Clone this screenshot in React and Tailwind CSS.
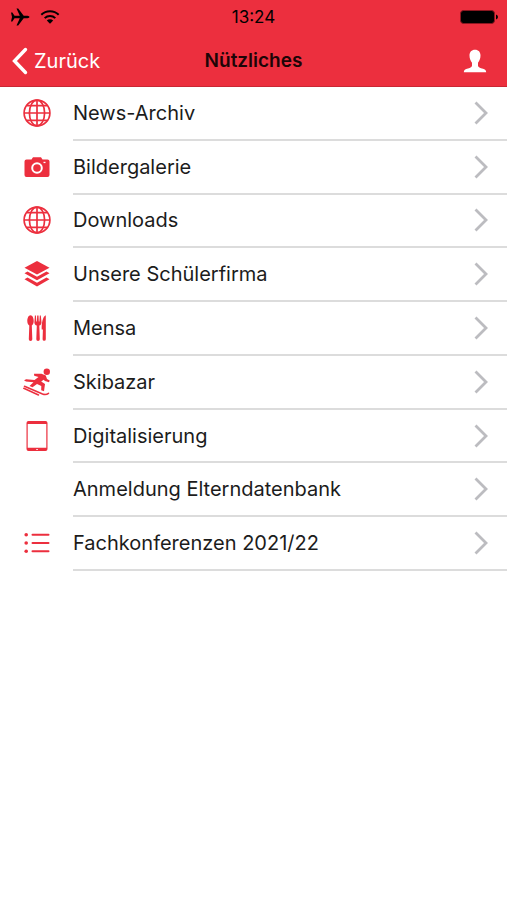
const RED = "text-[#ec2f3e]";

function Globe() {
  return (
    <svg viewBox="0 0 28 28" className="size-7" fill="none" stroke="currentColor" strokeWidth="1.7" aria-hidden="true">
      <circle cx="14" cy="14" r="12.9" />
      <ellipse cx="14" cy="14" rx="7.6" ry="12.9" />
      <path d="M14 1v26M1 14h26M3.6 6.7h20.8M3.6 21.3h20.8" />
    </svg>
  );
}

function Camera() {
  return (
    <svg viewBox="0 0 28 28" className="size-7" fill="currentColor" aria-hidden="true">
      <path d="M3.500 6.500h5L10 4.200h8l1.500 2.300h5q2 0 2 2v13.500q0 2-2 2h-21q-2 0-2-2V8.500q0-2 2-2z" />
      <circle cx="14" cy="15" r="4.800" fill="none" stroke="#fff" strokeWidth="2" />
      <path d="M20.500 8.800h2v1.300h-2z" fill="#fff" />
    </svg>
  );
}

function Layers() {
  return (
    <svg viewBox="0 0 28 28" className="size-7" fill="currentColor" aria-hidden="true">
      <path d="M14 1 26.500 7.800 14 14.500 1.500 7.800z" />
      <path d="M1.500 13.200 4.500 11.600 14 16.700 23.500 11.600 26.500 13.200 14 20.200z" />
      <path d="M1.500 19.200 4.500 17.600 14 22.700 23.500 17.600 26.500 19.200 14 26.600z" />
    </svg>
  );
}

function Cutlery() {
  return (
    <svg viewBox="0 0 28 28" className="size-7" fill="currentColor" aria-hidden="true">
      <path d="M7.500 1.200c2 0 3.200 2.900 3.200 5.800 0 2.300-.7 3.800-1.900 4.500l.5 13.700a1.700 1.700 0 0 1-3.500 0l.5-13.700C5 10.800 4.300 9.300 4.300 7c0-2.900 1.200-5.800 3.200-5.800z" />
      <path d="M11.900 1.500h1l.4 6h.6l.3-6h1.300l.3 6h.6l.4-6h1l.7 7c0 1.600-.8 2.700-2.200 3.100l.5 13.600a1.700 1.700 0 0 1-3.500 0l.5-13.600c-1.500-.4-2.400-1.500-2.400-3.100z" />
      <path d="M22.800 1.200v24a1.600 1.600 0 0 1-3.200 0l.3-9.700h-1.200C18.500 9 19.700 2.500 22.800 1.200z" />
    </svg>
  );
}

function Skier() {
  return (
    <svg viewBox="0 0 28 28" className="size-7" aria-hidden="true">
      <circle cx="23.800" cy="3.800" r="3.200" fill="currentColor" />
      <path
        fill="currentColor"
        d="M11 5.800 18.500 5.800 22.800 7.600 24 11 26.700 12.400 26 14.200 22 13 20.600 11.800 18.200 13.600 22 16 21 23.200 18.200 22.300 18.300 18 14 15.900 9.500 19.200 6.500 18 10.500 14.300 3 13.600 1 12.300 3.200 11.200 11.500 12 15.500 9 11.200 7.700z"
      />
      <path
        d="M1.500 18.300 19.500 26q3.500 1.200 6-.7M.8 20.300 15.500 27"
        fill="none"
        stroke="currentColor"
        strokeWidth="1.500"
        strokeLinecap="round"
      />
    </svg>
  );
}

function Tablet() {
  return (
    <svg viewBox="0 0 28 32" className="h-8 w-7" fill="currentColor" aria-hidden="true">
      <path
        fillRule="evenodd"
        d="M5.500 1h17q2 0 2 2v26q0 2-2 2h-17q-2 0-2-2V3q0-2 2-2zM4.700 4v23.700h18.600V4z"
      />
      <path d="M13.300 29h1.500v1h-1.500z" fill="#fff" />
    </svg>
  );
}

function ListIcon() {
  return (
    <svg viewBox="0 0 28 28" className="size-7" fill="currentColor" aria-hidden="true">
      <circle cx="3.200" cy="5.700" r="1.800" />
      <circle cx="3.200" cy="14" r="1.800" />
      <circle cx="3.200" cy="22.300" r="1.800" />
      <rect x="8.500" y="4.700" width="18" height="2" rx="1" />
      <rect x="8.500" y="13" width="18" height="2" rx="1" />
      <rect x="8.500" y="21.300" width="18" height="2" rx="1" />
    </svg>
  );
}

const ITEMS = [
  { label: "News-Archiv", Icon: Globe },
  { label: "Bildergalerie", Icon: Camera },
  { label: "Downloads", Icon: Globe },
  { label: "Unsere Schülerfirma", Icon: Layers },
  { label: "Mensa", Icon: Cutlery },
  { label: "Skibazar", Icon: Skier },
  { label: "Digitalisierung", Icon: Tablet },
  { label: "Anmeldung Elterndatenbank", Icon: null },
  { label: "Fachkonferenzen 2021/22", Icon: ListIcon },
];

function StatusBar() {
  return (
    <div className="grid h-[34px] grid-cols-3 items-center px-2 text-black">
      <div className="flex items-center gap-2.5 pl-0.5">
        <svg viewBox="0 0 20 18" className="h-[18px] w-5" fill="currentColor" aria-label="Flugmodus">
          <path d="M1 4.500h1.400L4.500 7.700h5.300L6.500.5h1.700l5.500 7.200h3.800q2 .4 2 1.300t-2 1.300h-3.800l-5.500 7.200H6.500l3.300-7.200H4.500l-2.100 3.200H1L2 9z" />
        </svg>
        <svg viewBox="0 0 20 16" className="h-4 w-5" fill="none" stroke="currentColor" strokeWidth="2" aria-label="WLAN">
          <path d="M1.300 5.700a12.400 12.400 0 0 1 17.400 0M4.700 9.100a7.500 7.500 0 0 1 10.600 0" />
          <path d="M6.800 11.500a4.500 4.500 0 0 1 6.400 0L10 14.700z" fill="currentColor" stroke="none" />
        </svg>
      </div>
      <div className="text-center text-[17px] leading-5">13:24</div>
      <svg viewBox="0 0 40 16" className="h-4 w-10 justify-self-end" aria-label="Akku voll">
        <rect x="1.500" y="1.500" width="34" height="13" rx="3" fill="#000" stroke="#8b1720" />
        <path d="M37 5.500q2 .6 2 2.500t-2 2.500z" fill="#000" />
      </svg>
    </div>
  );
}

export default function App() {
  return (
    <div className="min-h-screen bg-white font-['Inter','Liberation_Sans',sans-serif]">
      <header className="border-b border-[#c92734] bg-[#ec2f3e]">
        <StatusBar />
        <div className="grid h-[52px] grid-cols-[1fr_auto_1fr] items-center px-3 pt-0.5">
          <button type="button" className="flex items-center gap-1.5 justify-self-start text-xl text-white">
            <svg viewBox="0 0 16 28" className="h-7 w-4" fill="none" stroke="currentColor" strokeWidth="3.400" strokeLinecap="round" aria-hidden="true">
              <path d="M13.500 2.500 2.500 14l11 11.500" />
            </svg>
            Zurück
          </button>
          <h1 className="text-[19px] font-semibold text-[#1d0507]">Nützliches</h1>
          <button type="button" aria-label="Profil" className="justify-self-end pr-2 text-white">
            <svg viewBox="0 0 24 24" className="size-6" fill="currentColor" aria-hidden="true">
              <path d="M12 .8c3.500 0 5.500 2.300 5.500 5.800 0 3-1.100 5.500-2.500 7.200v3c0 1.300 1.500 2 4 2.700 2.700.7 4.200 1.400 4.200 3.800H.8c0-2.400 1.500-3.100 4.200-3.800 2.500-.7 4-1.400 4-2.700v-3C7.600 12.100 6.500 9.600 6.500 6.600 6.500 3.100 8.500.8 12 .8z" />
            </svg>
          </button>
        </div>
      </header>
      <nav aria-label="Nützliches">
        <ul className="grid min-h-[484px] auto-rows-fr">
          {ITEMS.map(({ label, Icon }) => (
            <li key={label}>
              <a href="#" className="flex h-full items-stretch">
                <span className={`flex w-[73px] shrink-0 items-center justify-center pb-0.5 ${RED}`}>{Icon && <Icon />}</span>
                <span className="flex flex-1 items-center justify-between border-b-2 border-[#dcdcdc] pr-[19px] text-xl text-[#1c1c1c]">
                  {label}
                  <svg viewBox="0 0 14 24" className="h-6 w-3.5" fill="none" stroke="#bcbcc0" strokeWidth="2.800" aria-hidden="true">
                    <path d="M1.500 1.500 12 12 1.500 22.500" />
                  </svg>
                </span>
              </a>
            </li>
          ))}
        </ul>
      </nav>
    </div>
  );
}
